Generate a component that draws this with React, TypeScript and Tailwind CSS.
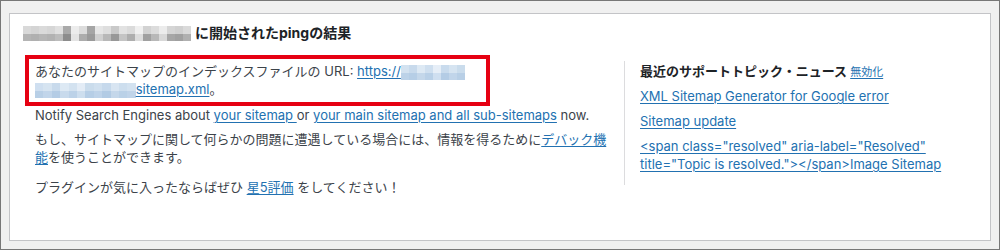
import React from "react";

const headTop = [
  "bg-[#d9d9d9]", "bg-[#d4d4d4]", "bg-[#dadada]", "bg-[#d6d6d6]", "bg-[#e0e0e0]", "bg-[#a9a9a9]", "bg-[#ececec]",
  "bg-[#dcdcdc]", "bg-[#a5a5a5]", "bg-[#e6e6e6]", "bg-[#dedede]", "bg-[#c9c9c9]", "bg-[#e2e2e2]", "bg-[#dbdbdb]",
  "bg-[#f0f0f0]", "bg-[#d2d2d2]", "bg-[#dcdcdc]", "bg-[#ececec]", "bg-[#d5d5d5]", "bg-[#d0d0d0]", "bg-[#dadada]",
];
const headBot = [
  "bg-[#b4b4b4]", "bg-[#b0b0b0]", "bg-[#b6b6b6]", "bg-[#b2b2b2]", "bg-[#bcbcbc]", "bg-[#8c8c8c]", "bg-[#e4e4e4]",
  "bg-[#acacac]", "bg-[#9a9a9a]", "bg-[#d0d0d0]", "bg-[#b8b8b8]", "bg-[#989898]", "bg-[#c4c4c4]", "bg-[#aeaeae]",
  "bg-[#dddddd]", "bg-[#a0a0a0]", "bg-[#b8b8b8]", "bg-[#d8d8d8]", "bg-[#a6a6a6]", "bg-[#a0a0a0]", "bg-[#b0b0b0]",
];
const blue1Top = ["bg-[#d3e2f0]", "bg-[#c8daec]", "bg-[#dde9f4]", "bg-[#cfdfef]", "bg-[#e6eef7]", "bg-[#c9dbed]", "bg-[#d6e4f1]", "bg-[#cadcec]"];
const blue1Bot = ["bg-[#bcd2e8]", "bg-[#b6cee6]", "bg-[#c4d7ea]", "bg-[#b9d0e7]", "bg-[#cfdff0]", "bg-[#b4cce5]", "bg-[#c1d5ea]", "bg-[#b8cfe6]"];
const blue2Top = ["bg-[#cfdff0]", "bg-[#d6e4f1]", "bg-[#c8daec]", "bg-[#dde9f4]", "bg-[#d3e2f0]", "bg-[#e3ecf6]", "bg-[#cadcec]", "bg-[#d0e0ef]", "bg-[#c6d9ec]", "bg-[#d8e5f2]", "bg-[#cddeee]", "bg-[#d3e2f0]"];
const blue2Bot = ["bg-[#b8cfe6]", "bg-[#c1d5ea]", "bg-[#b4cce5]", "bg-[#c8daec]", "bg-[#bcd2e8]", "bg-[#cddeee]", "bg-[#b6cee6]", "bg-[#bed3e9]", "bg-[#b2cbe4]", "bg-[#c4d7ea]", "bg-[#bad1e7]", "bg-[#c0d4e9]"];

function Mosaic({ top, bot, cell }: { top: string[]; bot: string[]; cell: string }) {
  return (
    <span className="inline-flex flex-col align-middle">
      <span className="flex">
        {top.map((c, i) => (
          <span key={i} className={`${cell} h-[8px] ${c}`} />
        ))}
      </span>
      <span className="flex">
        {bot.map((c, i) => (
          <span key={i} className={`${cell} h-[7px] ${c}`} />
        ))}
      </span>
    </span>
  );
}

const link = "text-[#2271b1] underline underline-offset-[2px] decoration-[1px]";

export default function App() {
  return (
    <div className="w-[1000px] h-[250px] border border-[#777777] bg-[#f0f0f0] pt-[12px] px-[8px] pb-[8px] flex flex-col font-[family-name:Inter,'Noto_Sans_CJK_JP',sans-serif] text-[13px] leading-[18px] text-[#3c434a]">
      <div className="flex-1 bg-white border border-[#c3c4c7] pl-[13px] pt-[9px]">
        <h2 className="flex items-center text-[14px] leading-[20px] font-bold text-[#1d2327]">
          <Mosaic top={headTop} bot={headBot} cell="w-[8px]" />
          <span className="ml-[4px]">に開始されたpingの結果</span>
        </h2>
        <div className="flex pl-[12px] mt-[19px]">
          <div className="w-[581px] mr-[8px]">
            <div className="border-4 border-[#e60012] ml-[-10px] mt-[-7px] w-[465px] pl-[6px] pt-[3px] pb-[4px]">
              <p>
                あなたのサイトマップのインデックスファイルの URL:{" "}
                <a className={link}>https://</a>
                <Mosaic top={blue1Top} bot={blue1Bot} cell="w-[8px]" />
                <br />
                <Mosaic top={blue2Top} bot={blue2Bot} cell="w-[8.4px]" />
                <a className={link}>sitemap.xml</a>。
              </p>
            </div>
            <p>
              Notify Search Engines about <a className={link}>your sitemap </a> or{" "}
              <a className={link}>your main sitemap and all sub-sitemaps</a> now.
            </p>
            <p className="mt-[6px]">
              もし、サイトマップに関して何らかの問題に遭遇している場合には、情報を得るために
              <a className={link}>デバック機能</a>を使うことができます。
            </p>
            <p className="mt-[12px]">
              プラグインが気に入ったならばぜひ <a className={link}>星5評価</a> をしてください！
            </p>
          </div>
          <div className="border-l border-[#dcdcde] pl-[15px] pt-[1px] pb-[12px] self-start w-[350px] mt-[-1px]">
            <div className="font-bold text-[#1d2327]">
              最近のサポートトピック・ニュース{" "}
              <a className={`${link} text-[11px] font-normal`}>無効化</a>
            </div>
            <ul className="mt-[6px] flex flex-col gap-[7px]">
              <li>
                <a className={link}>XML Sitemap Generator for Google error</a>
              </li>
              <li>
                <a className={link}>Sitemap update</a>
              </li>
              <li className="w-[312px]">
                <a className={link}>
                  &lt;span class="resolved" aria-label="Resolved" title="Topic is resolved."&gt;&lt;/span&gt;Image Sitemap
                </a>
              </li>
            </ul>
          </div>
        </div>
      </div>
    </div>
  );
}
